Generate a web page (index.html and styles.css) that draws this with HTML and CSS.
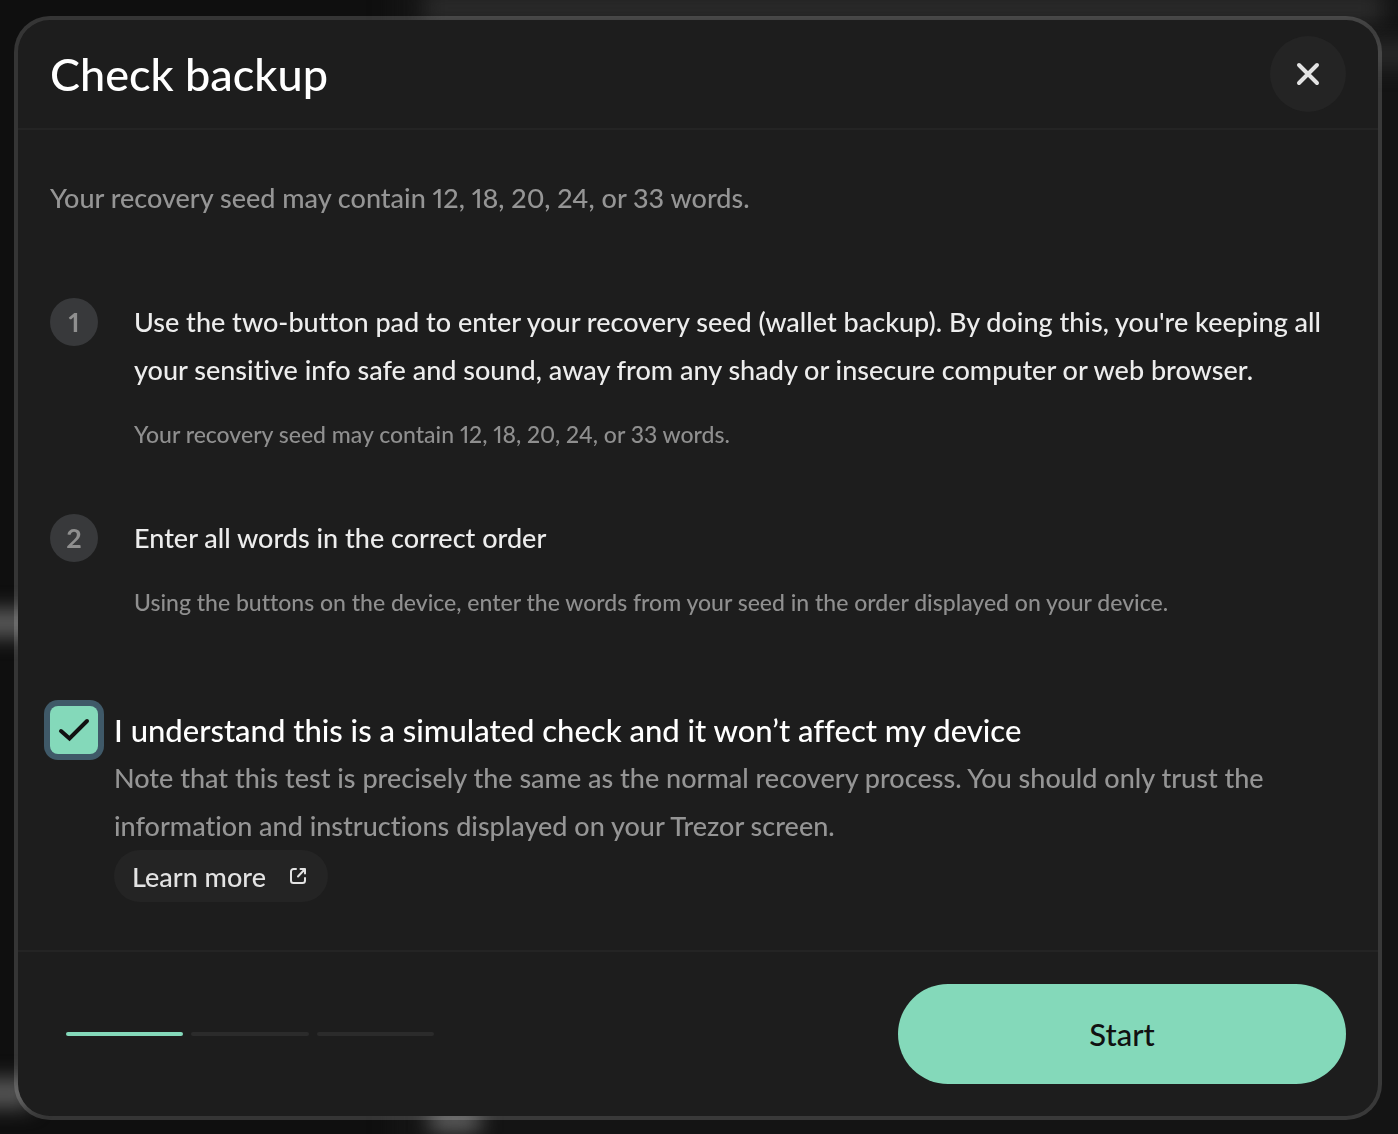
FILE: index.html
```html
<!DOCTYPE html>
<html lang="en">
<head>
<meta charset="utf-8">
<meta name="viewport" content="width=device-width, initial-scale=1">
<title>Check backup</title>
<link rel="stylesheet" href="styles.css">
</head>
<body>
<div class="backdrop" aria-hidden="true">
  <div class="glow glow-panel"></div>
  <div class="glow glow-heading"></div>
  <div class="glow glow-tab"></div>
  <div class="glow glow-menu"></div>
  <div class="glow glow-account"></div>
  <div class="glow glow-footer"></div>
</div>
<main class="page">
  <section class="modal" role="dialog" aria-labelledby="title">
    <header class="modal-header">
      <h1 class="title" id="title">Check backup</h1>
      <button class="close" type="button" aria-label="Close">
        <svg width="24" height="24" viewBox="0 0 24 24" fill="none" stroke="currentColor" stroke-width="4" stroke-linecap="round"><path d="M3 3l18 18M21 3L3 21"/></svg>
      </button>
    </header>
    <div class="modal-body">
      <p class="intro">Your recovery seed may contain 12, 18, 20, 24, or 33 words.</p>
      <ol class="steps">
        <li class="step">
          <span class="step-number">1</span>
          <div class="step-content">
            <p class="step-text">Use the two-button pad to enter your recovery seed (wallet backup). By doing this, you're keeping all your sensitive info safe and sound, away from any shady or insecure computer or web browser.</p>
            <p class="step-detail">Your recovery seed may contain 12, 18, 20, 24, or 33 words.</p>
          </div>
        </li>
        <li class="step">
          <span class="step-number">2</span>
          <div class="step-content">
            <p class="step-text">Enter all words in the correct order</p>
            <p class="step-detail">Using the buttons on the device, enter the words from your seed in the order displayed on your device.</p>
          </div>
        </li>
      </ol>
      <div class="consent">
        <span class="check">
          <input class="check-input" type="checkbox" id="understand" checked>
          <svg class="check-mark" width="48" height="48" viewBox="0 0 48 48" fill="none" stroke="currentColor" stroke-width="4" stroke-linecap="round"><path d="M11 25l8.500 7.500L37 15"/></svg>
        </span>
        <div class="consent-content">
          <label class="consent-label" for="understand">I understand this is a simulated check and it won’t affect my device</label>
          <p class="consent-note">Note that this test is precisely the same as the normal recovery process. You should only trust the information and instructions displayed on your Trezor screen.</p>
          <a class="learn-more" href="#learn-more">Learn more
            <svg width="20" height="20" viewBox="0 0 20 20" fill="none" stroke="currentColor" stroke-width="2" stroke-linecap="round" stroke-linejoin="round"><path d="M8 3H5.500A2.500 2.500 0 0 0 3 5.500v9A2.500 2.500 0 0 0 5.500 17h9a2.500 2.500 0 0 0 2.500-2.500V12M12.500 3H17v4.500M17 3l-7 7.500"/></svg>
          </a>
        </div>
      </div>
    </div>
    <footer class="modal-footer">
      <div class="progress" role="progressbar" aria-label="Step 1 of 3" aria-valuenow="1" aria-valuemin="0" aria-valuemax="3">
        <span class="bar bar-active"></span>
        <span class="bar"></span>
        <span class="bar"></span>
      </div>
      <button class="start" type="button">Start</button>
    </footer>
  </section>
</main>
</body>
</html>
```
FILE: styles.css
```css
* {
  box-sizing: border-box;
}

body {
  margin: 0;
  background: #0f0f0f;
  color: #fff;
  font-family: Lato, "Liberation Sans", sans-serif;
  font-weight: 500;
  font-variant-ligatures: none;
  font-variant-numeric: proportional-nums;
}

h1,
p,
ol {
  margin: 0;
  padding: 0;
}

button {
  border: 0;
  padding: 0;
  font: inherit;
  cursor: pointer;
}

/* Blurred app behind the dialog */
.backdrop {
  position: fixed;
  inset: 0;
  overflow: hidden;
}

.glow {
  position: absolute;
  filter: blur(10px);
}

.glow-panel {
  inset: -40px -40px -40px 390px;
  background: #141414;
}

.glow-heading {
  top: -8px;
  left: 424px;
  right: 16px;
  height: 32px;
  background: #2a2a2a;
}

.glow-tab {
  top: 40px;
  right: -20px;
  width: 60px;
  height: 28px;
  background: #272727;
}

.glow-menu {
  top: 609px;
  left: -40px;
  width: 80px;
  height: 28px;
  background: #5a5a5a;
}

.glow-account {
  top: 1078px;
  left: -40px;
  width: 72px;
  height: 30px;
  background: #555;
}

.glow-footer {
  top: 1108px;
  left: 430px;
  width: 50px;
  height: 24px;
  background: #606060;
}

.page {
  position: relative;
  padding: 16px 16px 14px 14px;
}

.modal {
  border: 4px solid rgba(255, 255, 255, 0.16);
  border-radius: 36px;
  background: #1d1d1d;
  background-clip: padding-box;
}

.modal-header {
  display: flex;
  align-items: center;
  justify-content: space-between;
  padding: 16px 32px;
  border-bottom: 2px solid #242424;
}

.title {
  font-size: 45px;
  font-weight: 500;
  line-height: 56px;
}

.close {
  display: grid;
  place-items: center;
  width: 76px;
  height: 76px;
  border-radius: 50%;
  background: #242424;
  color: #e3e3e3;
}

.modal-body {
  padding: 44px 32px 48px;
}

.intro {
  color: #959595;
  font-size: 27px;
  line-height: 48px;
}

.steps {
  display: grid;
  gap: 60px;
  margin: 76px 0 84px;
  list-style: none;
}

.step {
  display: flex;
  gap: 36px;
}

.step-number {
  flex: none;
  width: 48px;
  height: 48px;
  border-radius: 50%;
  background: #38393b;
  color: #8f8f8f;
  font-size: 27px;
  font-weight: 700;
  line-height: 48px;
  text-align: center;
}

.step-text {
  color: #ededed;
  font-size: 27px;
  line-height: 48px;
}

.step-detail {
  margin-top: 20px;
  color: #8f8f8f;
  font-size: 23px;
  line-height: 40px;
}

.consent {
  display: flex;
  gap: 16px;
}

.check {
  display: grid;
  flex: none;
  width: 48px;
  height: 48px;
}

.check-input,
.check-mark {
  grid-area: 1 / 1;
}

.check-input {
  appearance: none;
  width: 48px;
  height: 48px;
  margin: 0;
  border-radius: 8px;
  background: #2a2a2a;
  box-shadow: 0 0 0 6px #3f5968;
}

.check-input:checked {
  background: #84d9ba;
}

.check-mark {
  z-index: 1;
  color: #111;
  pointer-events: none;
}

.check-input:not(:checked) + .check-mark {
  visibility: hidden;
}

.consent-label {
  display: block;
  font-size: 31px;
  line-height: 48px;
}

.consent-note {
  color: #959595;
  font-size: 27px;
  line-height: 48px;
}

.learn-more {
  display: inline-flex;
  align-items: center;
  gap: 22px;
  height: 52px;
  padding: 0 20px 0 18px;
  border-radius: 26px;
  background: #242424;
  color: #e3e3e3;
  font-size: 27px;
  text-decoration: none;
  vertical-align: top;
}

.modal-footer {
  display: flex;
  align-items: center;
  justify-content: space-between;
  gap: 32px;
  padding: 32px;
  border-top: 2px solid #242424;
}

.progress {
  display: flex;
  gap: 8px;
  width: 400px;
  padding: 0 16px;
}

.bar {
  flex: 1;
  height: 4px;
  border-radius: 2px;
  background: #2b2b2b;
}

.bar-active {
  background: #84d9ba;
}

.start {
  width: 448px;
  height: 100px;
  border-radius: 50px;
  background: #84d9ba;
  color: #111;
  font-size: 31px;
}
```
